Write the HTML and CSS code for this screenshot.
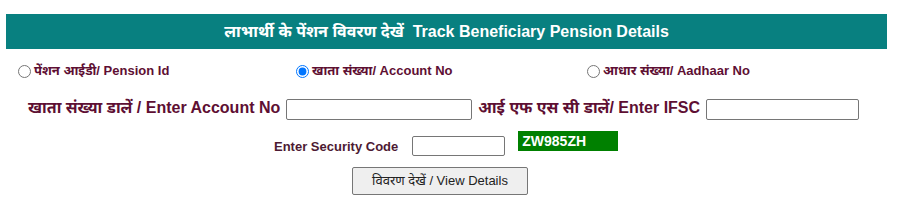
FILE: index.html
```html
<!DOCTYPE html>
<html lang="hi">
<head>
  <meta charset="UTF-8">
  <meta name="viewport" content="width=device-width, initial-scale=1.0">
  <title>Track Beneficiary Pension Details</title>
  <link rel="stylesheet" href="styles.css">
</head>
<body>
  <div class="panel">
    <!-- शीर्षक -->
    <div class="head">लाभार्थी के पेंशन विवरण देखें&nbsp; Track Beneficiary Pension Details</div>

    <!-- खोज का प्रकार -->
    <div class="options">
      <label class="opt"><input type="radio" name="searchBy" value="pension">पेंशन आईडी/ Pension Id</label>
      <label class="opt"><input type="radio" name="searchBy" value="account" checked>खाता संख्या/ Account No</label>
      <label class="opt"><input type="radio" name="searchBy" value="aadhaar">आधार संख्या/ Aadhaar No</label>
    </div>

    <div class="row-account">
      <span class="big-label">खाता संख्या डालें / Enter Account No</span>
      <input type="text" class="field account-field">
      <span class="big-label">आई एफ एस सी डालें/ Enter IFSC</span>
      <input type="text" class="field ifsc-field">
    </div>

    <div class="row-code">
      <span class="code-label">Enter Security Code</span>
      <input type="text" class="field code-field">
      <span class="captcha">ZW985ZH</span>
    </div>

    <div class="actions">
      <button class="view-btn">विवरण देखें / View Details</button>
    </div>
  </div>
</body>
</html>
```

FILE: styles.css
```css
body {
  margin: 0;
  padding: 14px 0 0 6px;
  background: #fff;
  font-family: "Liberation Sans", Arial, "Noto Sans Devanagari", "Noto Sans", sans-serif;
}
.panel {
  width: 881px;
}
/* हरे-नीले रंग की पट्टी */
.head {
  background: #088080;
  color: #fff;
  font-size: 16px;
  font-weight: bold;
  height: 35px;
  line-height: 35px;
  text-align: center;
}
/* रेडियो बटन */
.options {
  display: grid;
  grid-template-columns: 278px 291px auto;
  padding-left: 12px;
  height: 26px;
  margin-top: 9px;
  align-items: center;
}
.opt {
  display: flex;
  align-items: center;
  font-size: 13px;
  font-weight: bold;
  color: #5e0f33;
}
.opt input {
  width: 13px;
  height: 13px;
  margin: 0 3px 0 0;
}
.row-account {
  display: flex;
  align-items: center;
  padding-left: 22px;
  margin-top: 15px;
  height: 21px;
}
.big-label {
  font-size: 16px;
  font-weight: bold;
  color: #5e0f33;
  white-space: nowrap;
}
.field {
  box-sizing: border-box;
  border: 1px solid #767676;
  border-radius: 2px;
  padding: 1px 2px;
  font-size: 13px;
  background: #fff;
}
.account-field {
  width: 186px;
  height: 21px;
  margin: 0 6px;
}
.ifsc-field {
  width: 153px;
  height: 21px;
  margin-left: 6px;
}
.row-code {
  display: flex;
  align-items: flex-start;
  padding-left: 268px;
  margin-top: 11px;
  height: 25px;
}
.code-label {
  font-size: 13px;
  font-weight: bold;
  color: #4d1a33;
  margin-top: 8px;
}
.code-field {
  width: 93px;
  height: 20px;
  margin: 5px 13px 0 14px;
}
.captcha {
  box-sizing: border-box;
  width: 100px;
  height: 20px;
  background: #008000;
  color: #fff;
  font-size: 14px;
  font-weight: bold;
  line-height: 20px;
  padding-left: 4px;
}
.actions {
  padding-left: 346px;
  margin-top: 11px;
}
.view-btn {
  width: 176px;
  height: 28px;
  background: #efefef;
  border: 1px solid #767676;
  border-radius: 2px;
  color: #222;
  font-family: inherit;
  font-size: 13px;
}
```
